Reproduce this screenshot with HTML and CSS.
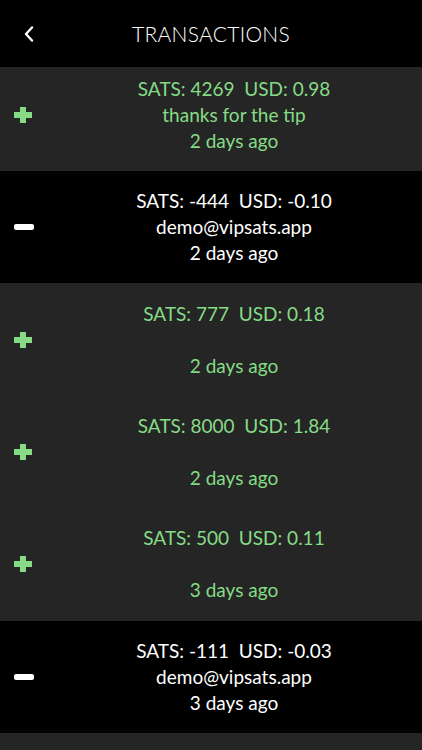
FILE: index.html
```html
<!DOCTYPE html>
<html lang="en">
  <head>
    <meta charset="UTF-8" />
    <meta name="viewport" content="width=device-width, initial-scale=1.0" />
    <title>Transactions</title>
    <link rel="stylesheet" href="styles.css">
  </head>
  <body>
    <header class="topbar">
      <button class="topbar__back" aria-label="Back">
        <svg width="10" height="16" viewBox="0 0 10 16">
          <path d="M8 1.5 L2 8 L8 14.5" fill="none" stroke="#fff" stroke-width="2.4" stroke-linecap="round" stroke-linejoin="round" />
        </svg>
      </button>
      <h1 class="topbar__title">TRANSACTIONS</h1>
    </header>

    <ul class="tx-list">
      <li class="tx tx--in">
        <span class="tx__sign">
          <svg width="18" height="16" viewBox="0 0 18 16"><path d="M6 0h6v5h6v6h-6v5h-6v-5h-6v-6h6z" fill="currentColor" /></svg>
        </span>
        <div class="tx__body">
          <div>SATS: 4269&nbsp;&nbsp;USD: 0.98</div>
          <div>thanks for the tip</div>
          <div>2 days ago</div>
        </div>
      </li>
      <li class="tx tx--out">
        <span class="tx__sign"><span class="tx__minus"></span></span>
        <div class="tx__body">
          <div>SATS: -444&nbsp;&nbsp;USD: -0.10</div>
          <div>demo@vipsats.app</div>
          <div>2 days ago</div>
        </div>
      </li>
      <li class="tx tx--in">
        <span class="tx__sign">
          <svg width="18" height="16" viewBox="0 0 18 16"><path d="M6 0h6v5h6v6h-6v5h-6v-5h-6v-6h6z" fill="currentColor" /></svg>
        </span>
        <div class="tx__body">
          <div>SATS: 777&nbsp;&nbsp;USD: 0.18</div>
          <div>&nbsp;</div>
          <div>2 days ago</div>
        </div>
      </li>
      <li class="tx tx--in">
        <span class="tx__sign">
          <svg width="18" height="16" viewBox="0 0 18 16"><path d="M6 0h6v5h6v6h-6v5h-6v-5h-6v-6h6z" fill="currentColor" /></svg>
        </span>
        <div class="tx__body">
          <div>SATS: 8000&nbsp;&nbsp;USD: 1.84</div>
          <div>&nbsp;</div>
          <div>2 days ago</div>
        </div>
      </li>
      <li class="tx tx--in">
        <span class="tx__sign">
          <svg width="18" height="16" viewBox="0 0 18 16"><path d="M6 0h6v5h6v6h-6v5h-6v-5h-6v-6h6z" fill="currentColor" /></svg>
        </span>
        <div class="tx__body">
          <div>SATS: 500&nbsp;&nbsp;USD: 0.11</div>
          <div>&nbsp;</div>
          <div>3 days ago</div>
        </div>
      </li>
      <li class="tx tx--out">
        <span class="tx__sign"><span class="tx__minus"></span></span>
        <div class="tx__body">
          <div>SATS: -111&nbsp;&nbsp;USD: -0.03</div>
          <div>demo@vipsats.app</div>
          <div>3 days ago</div>
        </div>
      </li>
      <li class="tx tx--in tx--peek"></li>
    </ul>
  </body>
</html>
```

FILE: styles.css
```css
* {
  box-sizing: border-box;
}

body {
  margin: 0;
  padding: 0;
  height: 100vh;
  background: #000;
  font-family: Lato, "Open Sans", sans-serif;
  color: #fff;
  overflow: hidden;
}

.topbar {
  height: 67px;
  display: flex;
  align-items: center;
  justify-content: center;
  position: relative;
}

.topbar__back {
  position: absolute;
  left: 20px;
  top: 24px;
  width: 18px;
  height: 20px;
  padding: 0;
  border: 0;
  background: none;
  display: flex;
  align-items: center;
  justify-content: center;
}

.topbar__title {
  margin: 0;
  font-size: 21px;
  font-weight: 300;
  letter-spacing: 0.3px;
  color: #fff;
}

.tx-list {
  list-style: none;
  margin: 0;
  padding: 0;
}

.tx {
  height: 112.4px;
  display: flex;
  align-items: center;
}

.tx:first-child {
  height: 104px;
  padding-bottom: 8px;
}

/* last row only peeks in at the bottom of the screen */
.tx--peek {
  height: 17px;
}

.tx--in {
  background: #252525;
  color: #86dc86;
}

.tx--out {
  background: #000;
  color: #fff;
}

.tx__sign {
  width: 46px;
  padding-left: 14px;
  display: flex;
  align-items: center;
}

.tx__minus {
  display: block;
  width: 20px;
  height: 6px;
  border-radius: 2px;
  background: #fff;
}

.tx__body {
  flex: 1;
  text-align: center;
  font-size: 19px;
  line-height: 26px;
}
```
